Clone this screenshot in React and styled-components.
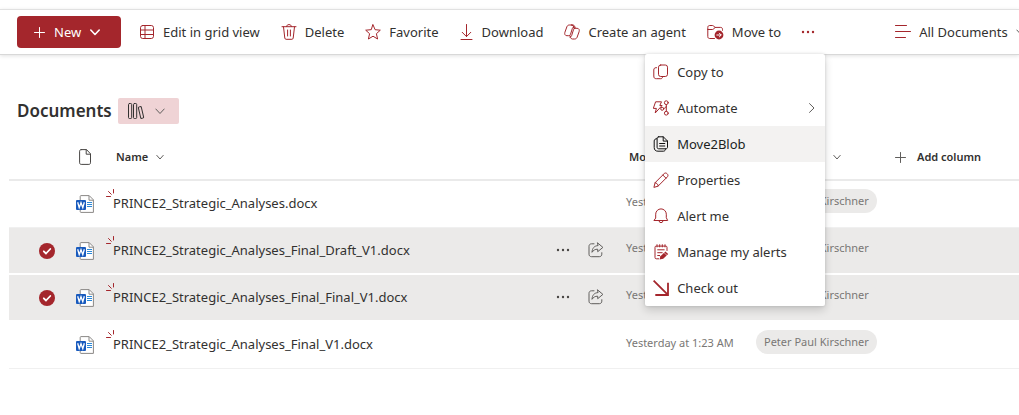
import React from "react";
import styled, { createGlobalStyle, css } from "styled-components";

const red = "#a4262c";

const GlobalStyle = createGlobalStyle`
  * { box-sizing: border-box; }
  body { margin: 0; background: #fff; overflow-x: hidden; }
  body, button { font-family: "Noto Sans", "Open Sans", sans-serif; font-size: 13px; line-height: 20px; color: #323130; }
  button { border: 0; padding: 0; margin: 0; background: none; cursor: pointer; white-space: nowrap; }
  svg { display: block; flex: none; }
`;

const Page = styled.div`
  padding-top: 9px;
`;

const CommandBar = styled.header`
  display: flex;
  align-items: center;
  height: 46px;
  padding-left: 17px;
  border-top: 1px solid #e1e1e1;
  border-bottom: 1px solid #d8d8d8;
  box-shadow: 0 1px 4px rgba(0, 0, 0, 0.12);
`;

const NewButton = styled.button`
  display: flex;
  align-items: center;
  flex: none;
  gap: 9px;
  width: 104px;
  height: 32px;
  padding-left: 17px;
  margin-right: 7px;
  border-radius: 4px;
  background: ${red};
  color: #fff;
`;

const CommandButton = styled.button`
  display: flex;
  align-items: center;
  flex: none;
  gap: 8px;
  height: 40px;
  padding: 0 10px 0 11px;
`;

const Overflow = styled.div`
  position: relative;
  flex: none;
`;

const MoreButton = styled.button`
  display: flex;
  align-items: center;
  justify-content: center;
  width: 34px;
  height: 40px;
`;

const Menu = styled.ul`
  position: absolute;
  z-index: 2;
  top: 42px;
  right: 0;
  width: 180px;
  margin: 0;
  padding: 0;
  list-style: none;
  background: #fff;
  border-radius: 2px;
  box-shadow: 0 4px 8px rgba(0, 0, 0, 0.16), 0 0 3px rgba(0, 0, 0, 0.14);
`;

const MenuButton = styled.button`
  display: flex;
  align-items: center;
  gap: 8px;
  width: 100%;
  height: 36px;
  padding: 0 8px;
  text-align: left;
  ${(p) => p.$active && css`
    background: #f3f2f1;
    color: #201f1e;
  `}
`;

const MenuText = styled.span`
  flex: 1;
`;

const ViewArea = styled.div`
  display: flex;
  flex: 1;
  min-width: 0;
  margin-left: 59px;
  overflow: hidden;
`;

const TitleRow = styled.div`
  display: flex;
  align-items: center;
  gap: 6px;
  padding: 43px 17px 11px;
`;

const Title = styled.h1`
  margin: 0;
  font-size: 17px;
  line-height: 26px;
  font-weight: 600;
`;

const LibraryButton = styled.button`
  display: flex;
  align-items: center;
  gap: 10px;
  width: 61px;
  height: 26px;
  padding: 0 10px;
  border-radius: 2px;
  background: #efd3d5;
`;

const Table = styled.table`
  width: calc(100% - 9px);
  margin-left: 9px;
  table-layout: fixed;
  border-collapse: separate;
  border-spacing: 0;
`;

const Col = styled.col`
  width: ${(p) => (p.$width ? `${p.$width}px` : "auto")};
`;

const HeadCell = styled.th`
  height: 46px;
  padding: 0 0 0 ${(p) => p.$inset || 0}px;
  border-bottom: 2px solid #eaeaea;
  text-align: left;
`;

const HeadButton = styled.button`
  display: flex;
  align-items: center;
  gap: ${(p) => p.$gap || 8}px;
  font-size: 11px;
  line-height: 16px;
  font-weight: 600;
`;

const Row = styled.tr`
  & > td {
    background: ${(p) => (p.$selected ? "#ebeae9" : "#fff")};
    border-bottom: ${(p) => (p.$selected ? "2px solid #fff" : "1px solid #f0f0f0")};
  }
`;

const Cell = styled.td`
  height: 47px;
  padding: 0 0 0 ${(p) => p.$inset || 0}px;
`;

const Select = styled.input`
  appearance: none;
  display: block;
  width: 16px;
  height: 16px;
  margin: 0;
  border-radius: 50%;
  &:checked {
    background: ${red};
  }
`;

const SelectLabel = styled.label`
  display: grid;
  width: 16px;
  & > * { grid-area: 1 / 1; }
  svg { visibility: hidden; pointer-events: none; z-index: 1; }
  input:checked + svg { visibility: visible; }
`;

const NameCell = styled.div`
  display: flex;
  align-items: center;
  padding-bottom: 2px;
`;

const NewMark = styled.span`
  width: 7px;
  height: 28px;
`;

const FileLink = styled.a`
  flex: 1;
  color: #323130;
  text-decoration: none;
  white-space: nowrap;
`;

const RowActions = styled.div`
  display: flex;
  align-items: center;
  gap: 18px;
  padding-right: 14px;
`;

const Muted = styled.span`
  display: block;
  padding-bottom: 5px;
  font-size: 11px;
  line-height: 16px;
  color: #797775;
  white-space: nowrap;
`;

const PersonPill = styled.button`
  display: block;
  height: 24px;
  margin-bottom: 6px;
  padding: 0 8px;
  border-radius: 12px;
  background: #ebeae9;
  color: #797775;
  font-size: 11px;
`;

function Icon({ w = 16, h = 16, color = red, stroke = 1, children }) {
  return (
    <svg width={w} height={h} viewBox={`0 0 ${w} ${h}`} fill="none" stroke={color} strokeWidth={stroke} strokeLinecap="round" strokeLinejoin="round" aria-hidden="true">
      {children}
    </svg>
  );
}

const Plus = ({ color, size = 11 }) => (
  <Icon w={size} h={size} color={color}>
    <path d={`M${size / 2} .5V${size - 0.5}M.5 ${size / 2}H${size - 0.5}`} />
  </Icon>
);
const Chevron = ({ color = "#605e5c", w = 8, stroke = 1 }) => (
  <Icon w={w} h={8} color={color} stroke={stroke}>
    <path d={`M.8 ${4 - w / 5}L${w / 2} ${4 + w / 4}L${w - 0.8} ${4 - w / 5}`} />
  </Icon>
);
const GridIcon = () => (
  <Icon>
    <rect x="1.500" y="1.500" width="13" height="13" rx="2.200" />
    <path d="M6 1.500v13M1.500 6h13M1.500 10.500h13" />
  </Icon>
);
const TrashIcon = () => (
  <Icon>
    <path d="M1 2.700h14M5.600 2.500C5.800 1.200 6.500.6 8 .6s2.200.6 2.400 1.900M2.500 2.900l1.300 11.200c.1.700.6 1.200 1.300 1.200h5.800c.7 0 1.200-.5 1.300-1.200L13.500 2.900" />
    <path d="M6.600 6v6M9.400 6v6" />
  </Icon>
);
const StarIcon = () => (
  <Icon>
    <path d="M8 .8l2.100 4.900 5.200.5-3.900 3.500 1.200 5.300L8 12.200 3.400 15l1.200-5.300L.7 6.200l5.200-.5z" />
  </Icon>
);
const DownloadIcon = () => (
  <Icon w={14}>
    <path d="M6.500.5v12M2.200 8.300l4.300 4.300 4.300-4.300M1 15.500h11" />
  </Icon>
);
const AgentIcon = () => (
  <Icon>
    <path d="M9.900 4.200L9.400 2.400C9.100 1.500 8.500 1 7.600 1H5.300C4 1 3.200 1.800 2.800 3L.9 8.300c-.6 1.800.2 3.400 2 3.400h1.800c.9 0 1.500-.5 1.800-1.400L8.400 4.300C8.700 3.400 9.300 2.900 10.200 2.900" />
    <path d="M6.100 11.800l.5 1.800c.3.900.9 1.400 1.800 1.400h2.300c1.300 0 2.100-.8 2.500-2l1.900-5.300c.6-1.800-.2-3.400-2-3.400h-1.800c-.9 0-1.500.5-1.800 1.400l-1.900 6c-.3.900-.9 1.400-1.800 1.400" />
    <path d="M7.600 1c1 0 1.600.5 1.900 1.400l.6 1.900h1.200L10.700 2.400C10.400 1.500 9.800 1 8.900 1z" />
  </Icon>
);
const MoveIcon = () => (
  <Icon w={17}>
    <path d="M7.500 14.500H2.700C1.500 14.500.8 13.800.8 12.600V3.400c0-1.200.7-1.900 1.900-1.900h2.900c.5 0 .8.200 1.100.5L8 3.400h5.600c1.200 0 1.900.7 1.900 1.900v1M.8 5.500h4.700c.6 0 .9-.1 1.200-.5L8 3.400" />
    <circle cx="12" cy="11" r="4.400" fill={red} stroke="none" />
    <path d="M9.800 11h4.200M12.400 9.200L14.200 11l-1.800 1.800" stroke="#fff" />
  </Icon>
);
const Dots = ({ color = red }) => (
  <Icon w={14} h={4} color={color}>
    <g fill={color} stroke="none"><circle cx="2" cy="2" r="1.200" /><circle cx="7" cy="2" r="1.200" /><circle cx="12" cy="2" r="1.200" /></g>
  </Icon>
);
const ListIcon = () => (
  <Icon>
    <path d="M.5 1.500h11M.5 7.500h15M.5 13.500h10" />
  </Icon>
);
const CopyIcon = () => (
  <Icon>
    <rect x="5.500" y="1" width="9" height="11.500" rx="2.200" />
    <path d="M3.600 3.700h-.5C1.600 3.700.8 4.500.8 6v6c0 2 .8 2.700 2.600 2.700h4.300c1.200 0 1.900-.7 1.900-2" />
  </Icon>
);
const AutomateIcon = () => (
  <Icon>
    <path d="M3 1.800h5.500L6.800 5.500h2.300L2.200 13l1.200-4.600H.7z" />
    <circle cx="13.300" cy="2.700" r="1.900" />
    <circle cx="13.300" cy="13.200" r="1.900" />
    <path d="M13.300 4.600v6.700M13.200 6.500c-.2 1.300-1.100 1.800-2.300 1.800" />
    <circle cx="9.200" cy="8.800" r="1.500" fill="#fff" />
  </Icon>
);
const PagesIcon = () => (
  <Icon color="#111">
    <path d="M5.700.8h4.600L14.500 5v6.200c0 1-.6 1.600-1.600 1.600H5.700c-1 0-1.600-.6-1.600-1.600V2.400c0-1 .6-1.600 1.600-1.600zM10.200.8v4.300h4.300M6.600 7.500h5.200M6.600 10h5.200M3.900 2.700C2.200 2.700 1.200 3.500 1.200 5v6.400c0 2.500 1.300 3.800 3.800 3.800h5.400c1.300 0 2.100-.8 2.100-2.300" />
  </Icon>
);
const PencilIcon = () => (
  <Icon>
    <path d="M1 15l1.100-4.300L11.300 1.500c1.700-1.700 4.900 1.400 3.200 3.200L5.300 13.900zM9.800 3l3.200 3.200M2.100 10.700c1.700.3 2.900 1.500 3.200 3.200" />
  </Icon>
);
const BellIcon = () => (
  <Icon>
    <path d="M1.300 12.500h13.400L13.300 9.700V6.200a5.300 5.300 0 0 0-10.600 0v3.500zM6 12.700a2 2 0 0 0 4 0" />
  </Icon>
);
const NotepadIcon = () => (
  <Icon>
    <path d="M14 6.500V3.300c0-.8-.4-1.200-1.200-1.200H3.200c-.8 0-1.200.4-1.200 1.200v10.200c0 .8.400 1.300 1.200 1.300h2.500M4 .7v2.200M6.700.7v2.200M9.300.7v2.200M12 .7v2.200M4.700 5.800h6.500M4.700 8.700h4.500M4.700 11.500h2" />
    <path d="M6.600 15.500l.8-3.200 5-4.700 2.800 2.500-5 4.700z" fill={red} stroke="none" />
    <path d="M11.200 8.800l2.600 2.400" stroke="#fff" strokeWidth=".6" />
  </Icon>
);
const CheckOutIcon = () => (
  <Icon stroke={1.800}>
    <path d="M.6.600L14.700 14.700M15 2.800v12.200H2.300" strokeLinecap="butt" strokeLinejoin="miter" />
  </Icon>
);
const BooksIcon = () => (
  <Icon w={17} color="#323130">
    <rect x=".5" y=".500" width="3.200" height="15" rx="1" />
    <rect x="5.500" y=".500" width="3.200" height="15" rx="1" />
    <rect x="11.500" y="3.600" width="3" height="11.800" rx="1" transform="rotate(-13 13 9.500)" />
  </Icon>
);
const FileIcon = () => (
  <Icon w={12} color="#484644">
    <path d="M2.200.6h5.300l4 4.200v9c0 .9-.6 1.600-1.600 1.600H2.200c-1 0-1.600-.7-1.600-1.600V2.200C.6 1.300 1.200.6 2.200.6zM7.200.8v4.400h4.200" />
  </Icon>
);
const WordIcon = () => (
  <svg width="18" height="18" viewBox="0 0 18 18" fill="none" role="img" aria-label="Word document">
    <path d="M5 .6h8.200l4.200 4.200v12.600H5c-.5 0-.8-.3-.8-.8V1.400c0-.5.300-.8.800-.8z" fill="#fff" stroke="#8a8886" />
    <path d="M13 .8v4.400h4.200" stroke="#8a8886" />
    <path d="M11 7.500h5M11 9.500h5M11 11.500h5" stroke="#2b88d8" />
    <rect x="0" y="5" width="10" height="10" rx="1" fill="#185abd" />
    <path d="M1.700 7.300l1.500 5.300L5 7.700l1.800 4.900 1.500-5.300" stroke="#fff" strokeWidth="1.300" />
  </svg>
);
const SparkIcon = () => (
  <Icon w={8} h={10}>
    <path d="M7.500.5v3.500M2.500 2.500l2.800 2.800M.5 7.500H4.500" />
  </Icon>
);
const ShareIcon = () => (
  <Icon color="#605e5c">
    <path d="M6 1.800H3.600C2 1.800 1 2.800 1 4.300v7.900c0 1.500 1 2.500 2.600 2.500h7.700c1.500 0 2.500-1 2.500-2.500v-1.500" />
    <path d="M9.700 1l5.200 4.400-5.200 4.300V7.200C7 7.200 5.400 8.200 4 10.300c.2-4 2.200-6.500 5.700-6.700z" />
  </Icon>
);

const commands = [
  ["Edit in grid view", GridIcon],
  ["Delete", TrashIcon],
  ["Favorite", StarIcon],
  ["Download", DownloadIcon],
  ["Create an agent", AgentIcon],
  ["Move to", MoveIcon],
];

const menuItems = [
  ["Copy to", CopyIcon],
  ["Automate", AutomateIcon],
  ["Move2Blob", PagesIcon],
  ["Properties", PencilIcon],
  ["Alert me", BellIcon],
  ["Manage my alerts", NotepadIcon],
  ["Check out", CheckOutIcon],
];

const files = [
  ["PRINCE2_Strategic_Analyses.docx", false],
  ["PRINCE2_Strategic_Analyses_Final_Draft_V1.docx", true],
  ["PRINCE2_Strategic_Analyses_Final_Final_V1.docx", true],
  ["PRINCE2_Strategic_Analyses_Final_V1.docx", false],
];

export default function App() {
  return (
    <Page>
      <GlobalStyle />
      <CommandBar>
        <NewButton>
          <Plus color="#fff" />
          New
          <Chevron color="#fff" w={10} stroke={1.600} />
        </NewButton>
        {commands.map(([label, Glyph]) => (
          <CommandButton key={label}>
            <Glyph />
            {label}
          </CommandButton>
        ))}
        <Overflow>
          <MoreButton aria-label="More" aria-expanded="true"><Dots /></MoreButton>
          <Menu>
            {menuItems.map(([label, Glyph]) => (
              <li key={label}>
                <MenuButton $active={label === "Move2Blob"}>
                  <Glyph />
                  <MenuText>{label}</MenuText>
                  {label === "Automate" && (
                    <Icon w={12} h={10} color="#605e5c"><path d="M4.500 .6L9 5 4.500 9.400" /></Icon>
                  )}
                </MenuButton>
              </li>
            ))}
          </Menu>
        </Overflow>
        <ViewArea>
          <CommandButton>
            <ListIcon />
            All Documents
            <Chevron w={10} />
          </CommandButton>
        </ViewArea>
      </CommandBar>

      <main>
        <TitleRow>
          <Title>Documents</Title>
          <LibraryButton aria-label="Switch library">
            <BooksIcon />
            <Chevron w={10} />
          </LibraryButton>
        </TitleRow>
        <Table>
          <colgroup>
            <Col $width={67} />
            <Col $width={30} />
            <Col />
            <Col $width={130} />
            <Col $width={136} />
            <Col $width={135} />
          </colgroup>
          <thead>
            <tr>
              <HeadCell />
              <HeadCell $inset={3}><FileIcon /></HeadCell>
              <HeadCell $inset={10}><HeadButton>Name <Chevron /></HeadButton></HeadCell>
              <HeadCell $inset={11}><HeadButton>Modified <Chevron /></HeadButton></HeadCell>
              <HeadCell $inset={11}><HeadButton $gap={10}>Modified By <Chevron /></HeadButton></HeadCell>
              <HeadCell $inset={11}><HeadButton $gap={11}><Plus color="#605e5c" />Add column</HeadButton></HeadCell>
            </tr>
          </thead>
          <tbody>
            {files.map(([name, selected]) => (
              <Row key={name} $selected={selected}>
                <Cell $inset={30}>
                  <SelectLabel>
                    <Select type="checkbox" defaultChecked={selected} aria-label={`Select ${name}`} />
                    <Icon color="#fff" stroke={1.800}><path d="M4.800 8.300l2.200 2.200 4.300-4.500" /></Icon>
                  </SelectLabel>
                </Cell>
                <Cell><WordIcon /></Cell>
                <Cell>
                  <NameCell>
                    <NewMark><SparkIcon /></NewMark>
                    <FileLink href="#">{name}</FileLink>
                    {selected && (
                      <RowActions>
                        <button aria-label="More actions"><Dots color="#484644" /></button>
                        <button aria-label="Share"><ShareIcon /></button>
                      </RowActions>
                    )}
                  </NameCell>
                </Cell>
                <Cell $inset={8}><Muted>Yesterday at 1:23 AM</Muted></Cell>
                <Cell $inset={8}><PersonPill>Peter Paul Kirschner</PersonPill></Cell>
                <Cell />
              </Row>
            ))}
          </tbody>
        </Table>
      </main>
    </Page>
  );
}
